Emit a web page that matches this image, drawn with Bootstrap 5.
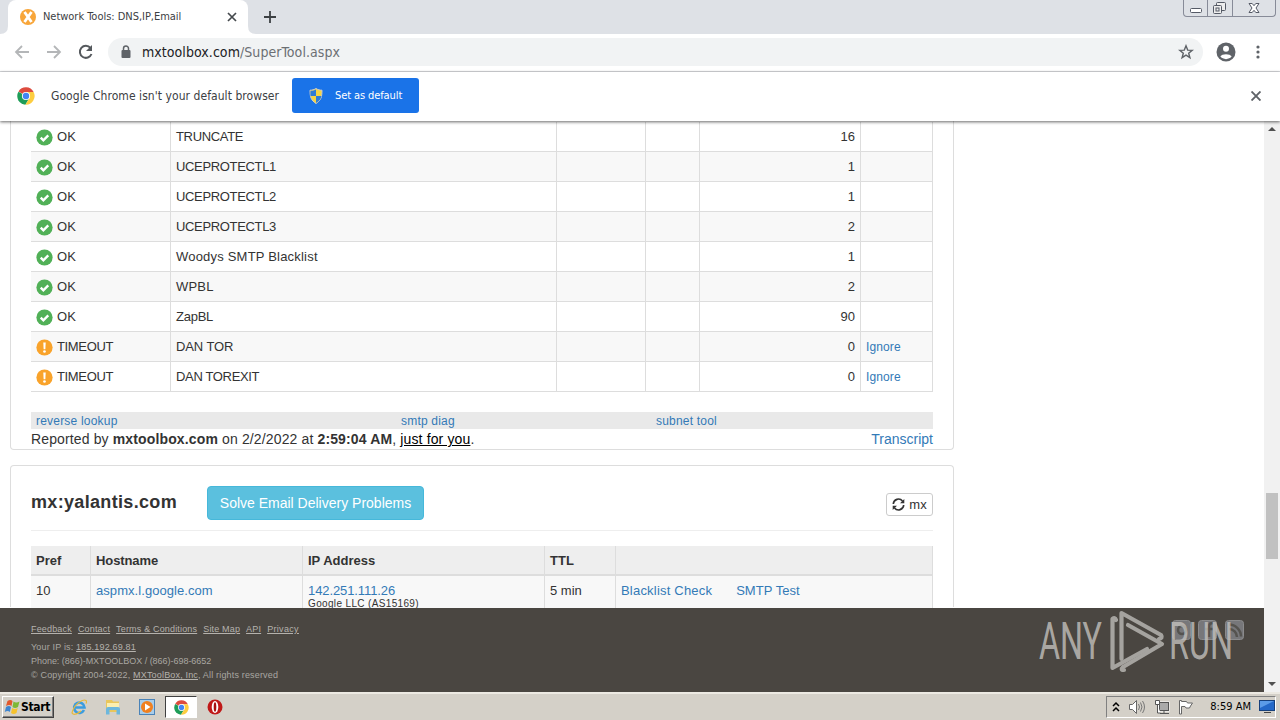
<!DOCTYPE html>
<html lang="en">
<head>
    <meta charset="UTF-8">
    <meta name="viewport" content="width=device-width, initial-scale=1.0">
    <title>Network Tools: DNS,IP,Email</title>
    <link href="https://cdn.jsdelivr.net/npm/bootstrap@5.3.0/dist/css/bootstrap.min.css" rel="stylesheet">
    <style>
        body { width: 1280px; height: 720px; font: 13px/18px "Liberation Sans", Arial, sans-serif; color: #333; background: #fff; }
        svg { display: block; flex: none; }
        a { color: #337ab7; text-decoration: none; }
        .chrome-font { font-family: "DejaVu Sans Condensed", "DejaVu Sans", sans-serif; }

        /* letter spacing steps */
        .ls-n3 { letter-spacing: -.34px; }
        .ls-n2 { letter-spacing: -.25px; }
        .ls-n1 { letter-spacing: -.1px; }
        .ls-0 { letter-spacing: -.03px; }
        .ls-1 { letter-spacing: .06px; }
        .ls-2 { letter-spacing: .2px; }
        .ls-3 { letter-spacing: .33px; }

        /* browser frame */
        .tabstrip { height: 34px; background: #dee1e6; }
        .tab-foot { align-self: flex-end; }
        .tab { width: 240px; height: 34px; background: #fff; border-radius: 8px 8px 0 0; padding: 0 11px 0 12px; font-size: 11px; color: #3c4043; gap: 7px; }
        .win-buttons { height: 17px; margin-right: 4px; border: 1px solid #878b98; border-top: 0; border-radius: 0 0 4px 4px; }
        .win-buttons span { width: 25px; height: 16px; border-right: 1px solid #878b98; }
        .win-buttons span:first-child { width: 24px; }
        .win-buttons span:last-child { width: 42px; border: 0; }
        .toolbar { height: 38px; border-bottom: 1px solid #d8dadd; padding: 0 14px 1px; }
        .omnibox { height: 28px; width: 1095px; border-radius: 14px; background: #f1f3f4; margin: 0 13px 0 14px; padding: 0 9px 0 10px; font-size: 14px; color: #6b6f73; gap: 8px; }
        .omnibox b { font-weight: 400; color: #202124; }
        .infobar { height: 49px; padding: 0 19px 2px 17px; box-shadow: 0 1px 3px #0009; z-index: 2; font-size: 12px; color: #3c4043; }
        .infobar-text { width: 241px; margin-left: 16px; white-space: nowrap; }
        .set-default { width: 127px; height: 35px; border-radius: 3px; background: #1a73e8; color: #fff; font-size: 11px; gap: 11px; }

        /* page */
        .viewport { height: 571px; }
        .content-area { height: 487px; padding: 0 10px; }
        .panel { width: 944px; border: 1px solid #ddd; padding: 0 20px; }
        .panel-top { height: 329px; border-top: 0; border-radius: 0 0 4px 4px; padding-top: 1px; }
        .panel-mx { height: 142px; margin-top: 15px; border-bottom: 0; border-radius: 4px 4px 0 0; }
        .grid-row { display: grid; grid-template-columns: 140px 386px 89px 54px 161px 72px; height: 30px; border-bottom: 1px solid #ddd; }
        .grid-row:nth-child(even) { background: #f8f8f8; }
        .grid-row > div, .mx-row > div { border-right: 1px solid #ddd; padding: 6px 5px 0; white-space: nowrap; }
        .grid-row svg { margin: 1px 4px 0 0; }
        .ignore-link { font-size: 12px; letter-spacing: .12px; }
        .tool-links { height: 17px; margin-top: 20px; background: #e9e9e9; font-size: 12px; line-height: 18px; display: grid; grid-template-columns: 365px 255px 1fr; padding-left: 5px; }
        .report-line { font-size: 14px; line-height: 20px; }
        .report-line span { letter-spacing: .135px; }
        .report-line u { color: #000; }
        .mx-head { height: 65px; border-bottom: 1px solid #eee; padding-top: 10px; }
        .mx-title { font-size: 18px; font-weight: 700; width: 176px; padding-bottom: 2px; }
        .btn-solve { height: 34px; width: 217px; background: #5bc0de; border: 1px solid #46b8da; border-radius: 4px; color: #fff; font-size: 14px; }
        .btn-mx { width: 47px; height: 23px; border: 1px solid #ccc; border-radius: 3px; margin-top: 3px; }
        .mx-row { display: grid; grid-template-columns: 60px 212px 242px 71px 317px; height: 32px; background: #f8f8f8; }
        .mx-row.titles { height: 30px; margin-top: 15px; background: #eee; border-bottom: 2px solid #ddd; font-weight: 700; }
        .asn { font-size: 10px; line-height: 10px; letter-spacing: .35px; margin-top: -1px; }
        .site-footer { height: 84px; background: #4a4641; color: #a9a6a1; font-size: 9px; line-height: 14px; padding: 14px 0 0 31px; letter-spacing: .17px; }
        .site-footer u { color: #b5b2ad; }
        .footer-links { gap: 6px; margin-bottom: 4px; }
        .watermark { left: 1036px; top: 608px; overflow: visible; }
        .scroll-track { width: 16px; background: #f1f1f1; }
        .scroll-thumb { width: 12px; height: 66px; margin-top: 360px; background: #c1c1c1; }

        /* taskbar */
        .taskbar { height: 28px; background: #d4d0c8; border-top: 2px solid #ece9e2; font-size: 11px; color: #000; padding: 0 4px 0 2px; }
        .start-btn { width: 52px; height: 22px; border: 1px solid; border-color: #fff #404040 #404040 #fff; box-shadow: inset -1px -1px #808080; font-size: 12px; font-weight: 700; padding-left: 1px; }
        .quick-icons { gap: 18px; margin-left: 17px; }
        .task-active { width: 32px; height: 22px; border: 1px solid; border-color: #404040 #fff #fff #404040; background: #fff; margin: 0 -8px; }
        .tray { width: 170px; height: 22px; border: 1px solid; border-color: #808080 #fff #fff #808080; padding-left: 5px; }
    </style>
</head>
<body class="overflow-hidden d-flex flex-column">
    <svg width="0" height="0" class="position-absolute">
        <symbol id="ok" viewBox="0 0 18 18">
            <circle cx="9" cy="9" r="8.6" fill="#51b057"/>
            <path d="M5 9.2l2.800 2.800L13 6.800" fill="none" stroke="#fff" stroke-width="2.500"/>
        </symbol>
        <symbol id="warn" viewBox="0 0 18 18">
            <circle cx="9" cy="9" r="8.6" fill="#f9a32b"/>
            <path d="M7.700 3.600h2.600L9.900 10.800H8.100z" fill="#fff"/>
            <circle cx="9" cy="13.200" r="1.400" fill="#fff"/>
        </symbol>
        <symbol id="chrome" viewBox="0 0 18 18">
            <path d="M9 9L1.500 4.500A8.700 8.700 0 0 1 16.600 5H9z" fill="#dd4b3e"/>
            <path d="M9 9L1.400 4.700A8.700 8.700 0 0 0 8.400 17.700L12.400 11z" fill="#1e9d58"/>
            <path d="M9 5h7.600A8.700 8.700 0 0 1 8.400 17.700L12.500 11z" fill="#fdcd40"/>
            <circle cx="9" cy="9" r="4.100" fill="#fff"/>
            <circle cx="9" cy="9" r="3.200" fill="#4285f4"/>
        </symbol>
    </svg>

    <!-- Tab strip -->
    <div class="tabstrip d-flex justify-content-between chrome-font flex-shrink-0">
        <div class="d-flex align-items-center">
            <svg class="tab-foot" width="8" height="8"><path d="M8 0v8H0q8 0 8-8z" fill="#fff"/></svg>
            <div class="tab d-flex align-items-center">
                <svg width="16" height="16" viewBox="0 0 16 16"><circle cx="8" cy="8" r="8" fill="#f8a63a"/><path d="M4.500 3l7 10M11.500 3l-7 10" stroke="#fff" stroke-width="2.800"/></svg>
                <span class="ls-0">Network Tools: DNS,IP,Email</span>
                <svg class="ms-auto" width="10" height="10" viewBox="0 0 10 10"><path d="M1 1l8 8M9 1L1 9" stroke="#45494d" stroke-width="1.700"/></svg>
            </div>
            <svg class="tab-foot" width="8" height="8"><path d="M0 0v8h8q-8 0-8-8z" fill="#fff"/></svg>
            <svg class="ms-2" width="12" height="12" viewBox="0 0 12 12"><path d="M6 0v12M0 6h12" stroke="#3c4043" stroke-width="1.800"/></svg>
        </div>
        <div class="win-buttons d-flex">
            <span><svg width="23" height="16"><rect x="6.500" y="8.500" width="11" height="4" rx="1" fill="#fff" stroke="#555a66"/></svg></span>
            <span><svg width="24" height="16" fill="#eee" stroke="#555a66"><rect x="8.500" y="2.500" width="9" height="8" rx="1"/><rect x="5.500" y="5.500" width="8" height="8" rx="1"/><rect x="8" y="8" width="3" height="3"/></svg></span>
            <span><svg width="42" height="16"><path d="M16 3.500h3.200l1.800 2.200 1.800-2.200H26L23 8l3 4.500h-3.200L21 10.300l-1.800 2.200H16L19 8z" fill="#fff" stroke="#555a66"/></svg></span>
        </div>
    </div>

    <!-- Address bar -->
    <div class="toolbar d-flex align-items-center chrome-font flex-shrink-0">
        <svg width="80" height="18" viewBox="0 0 80 18" fill="none" stroke="#b4b6b8" stroke-width="1.800">
            <path d="M15 9H2M8 3L2 9l6 6M33 9h13M40 3l6 6-6 6"/>
            <path d="M76.500 5A6 6 0 1 0 77.500 11" stroke="#55595d" stroke-width="2"/>
            <path d="M78 2v6h-6z" fill="#55595d" stroke="none"/>
        </svg>
        <div class="omnibox d-flex align-items-center">
            <svg width="16" height="16" viewBox="0 0 16 16"><rect x="3.500" y="6" width="9" height="8" rx="1" fill="#5f6368"/><path d="M5.500 6V4.500a2.500 2.500 0 0 1 5 0V6" fill="none" stroke="#5f6368" stroke-width="1.500"/></svg>
            <span class="ls-1"><b>mxtoolbox.com</b>/SuperTool.aspx</span>
            <svg class="ms-auto" width="16" height="16" viewBox="0 0 16 16"><path d="M8 1.800l1.700 4.300 4.500.3-3.500 2.900 1.200 4.400L8 11.200l-3.900 2.500 1.200-4.400-3.500-2.900 4.500-.3z" fill="none" stroke="#5f6368" stroke-width="1.400"/></svg>
        </div>
        <svg width="20" height="20" viewBox="0 0 20 20"><circle cx="10" cy="10" r="9.500" fill="#5f6368"/><circle cx="10" cy="6.800" r="3" fill="#fff"/><path d="M4.300 14.200a6.200 3.200 0 0 1 11.400 0 7 7 0 0 1-11.400 0z" fill="#fff"/></svg>
        <svg class="ms-auto" width="16" height="16" viewBox="0 0 16 16" fill="#5f6368"><circle cx="8" cy="3" r="1.600"/><circle cx="8" cy="8" r="1.600"/><circle cx="8" cy="13" r="1.600"/></svg>
    </div>

    <!-- Default browser prompt -->
    <div class="infobar position-relative d-flex align-items-center chrome-font flex-shrink-0">
        <svg width="18" height="18"><use href="#chrome"/></svg>
        <span class="infobar-text ls-1">Google Chrome isn't your default browser</span>
        <div class="set-default d-flex align-items-center">
            <svg class="ms-3" width="16" height="16" viewBox="0 0 16 16"><path d="M8 .5c2 1.300 4 1.700 6 1.700 0 7-1 10-6 13.300C3 12.200 2 9.200 2 2.200 4 2.200 6 1.800 8 .5z" fill="#f5d544" stroke="#ccc"/><path d="M8 1.500V8H2.600C2.300 6 2.500 4 2.500 2.800 5 2.700 6.500 2.300 8 1.500zM8 8h5.400c-.6 3-2 5-5.400 7z" fill="#2f7cd6"/></svg>
            <span class="ls-n1">Set as default</span>
        </div>
        <svg class="ms-auto" width="10" height="10" viewBox="0 0 10 10"><path d="M.5.5l9 9M9.500.5l-9 9" stroke="#5f6368" stroke-width="1.900"/></svg>
    </div>

    <div class="viewport d-flex flex-shrink-0">
        <main class="flex-grow-1">
            <div class="content-area overflow-hidden">
                <div class="panel panel-top">
                    <div id="blacklists"></div>
                    <div class="tool-links ls-2">
                        <a href="#">reverse lookup</a>
                        <a href="#">smtp diag</a>
                        <a href="#">subnet tool</a>
                    </div>
                    <div class="report-line d-flex justify-content-between">
                        <span>Reported by <b>mxtoolbox.com</b> on 2/2/2022 at <b>2:59:04 AM</b>, <u>just for you</u>.</span>
                        <a href="#">Transcript</a>
                    </div>
                </div>
                <div class="panel panel-mx">
                    <div class="mx-head d-flex align-items-center">
                        <div class="mx-title ls-3">mx:yalantis.com</div>
                        <div class="btn-solve d-flex align-items-center justify-content-center">Solve Email Delivery Problems</div>
                        <div class="btn-mx d-flex align-items-center justify-content-center gap-1 ms-auto">
                            <svg width="13" height="13" viewBox="0 0 13 13"><path d="M1.300 6A5.200 5.200 0 0 1 10.500 3M11.700 7A5.200 5.200 0 0 1 2.500 10" fill="none" stroke="#333" stroke-width="1.600"/><path d="M12.300 1v4.300H8zM.7 12V7.700H5z" fill="#333"/></svg>
                            <span>mx</span>
                        </div>
                    </div>
                    <div class="mx-row titles">
                        <div>Pref</div>
                        <div class="ls-n1">Hostname</div>
                        <div>IP Address</div>
                        <div>TTL</div>
                        <div></div>
                    </div>
                    <div class="mx-row">
                        <div>10</div>
                        <div class="ls-1"><a href="#">aspmx.l.google.com</a></div>
                        <div><a href="#" class="ls-n1">142.251.111.26</a><div class="asn">Google LLC (AS15169)</div></div>
                        <div>5 min</div>
                        <div class="d-flex gap-4"><a href="#" class="ls-2">Blacklist Check</a><a href="#" class="ls-1">SMTP Test</a></div>
                    </div>
                </div>
            </div>
            <footer class="site-footer">
                <div class="footer-links d-flex">
                    <u>Feedback</u><u>Contact</u><u>Terms &amp; Conditions</u><u>Site Map</u><u>API</u><u class="ls-3">Privacy</u>
                </div>
                <div>Your IP is: <u>185.192.69.81</u></div>
                <div class="ls-0">Phone: (866)-MXTOOLBOX / (866)-698-6652</div>
                <div>© Copyright 2004-2022, <u>MXToolBox, Inc</u>, All rights reserved</div>
            </footer>
        </main>
        <div class="scroll-track d-flex flex-column align-items-center py-1">
            <svg width="8" height="8"><path d="M0 6l4-4 4 4z" fill="#505050"/></svg>
            <div class="scroll-thumb"></div>
            <svg class="mt-auto" width="8" height="8"><path d="M0 2l4 4 4-4z" fill="#505050"/></svg>
        </div>
    </div>

    <!-- Watermark over the footer, with the social icons behind it -->
    <svg class="watermark position-absolute" width="212" height="66" viewBox="0 0 212 66">
        <g fill="#77777a" stroke="#8b8b8c">
            <rect x="136.500" y="12.500" width="18" height="19" rx="3"/><rect x="162.500" y="12.500" width="18" height="19" rx="3"/><rect x="189.500" y="12.500" width="18" height="19" rx="3"/>
        </g>
        <g fill="none" stroke="#55534f" stroke-width="2.500">
            <path d="M193 21a8 8 0 0 1 8 8M193 16.500a12 12 0 0 1 12 12"/><path d="M173 29V18q0-3 4-3M169 21h8"/><circle cx="146" cy="22" r="4"/>
        </g>
        <g font-family="Roboto, sans-serif" font-size="52" fill="#c4c2be" fill-opacity=".8">
            <text x="3" y="51" textLength="63" lengthAdjust="spacingAndGlyphs">ANY</text>
            <text x="133" y="51" textLength="64" lengthAdjust="spacingAndGlyphs">RUN</text>
        </g>
        <g fill="none" stroke="#a5a39f" stroke-width="4.200" stroke-linejoin="round" stroke-linecap="round" transform="translate(74 0)">
            <path d="M6 12Q5 9 2.500 11V60L37 41"/><path d="M11.500 51V5L51 27q2 3-2 4"/><path d="M18 17L52 36 13 59q-3 3 1 3"/>
        </g>
    </svg>

    <!-- Taskbar -->
    <div class="taskbar d-flex align-items-center justify-content-between chrome-font flex-shrink-0">
        <div class="d-flex align-items-center">
            <div class="start-btn d-flex align-items-center">
                <svg width="17" height="16" viewBox="0 0 16 16"><path d="M3 2q3-2 5 0L7 7q-2-2-5.500 0z" fill="#e2582c"/><path d="M9 2.500q2.500 2 6 0L13.500 8q-3 2-5.500 0z" fill="#7db836"/><path d="M1.500 8q3-2 5 0l-1.200 5q-2-2-5 0z" fill="#3d85d0"/><path d="M7.700 9q2.500 2 5.500 0L12 14q-3 2-5.500 0z" fill="#f6c22c"/></svg>
                <span class="ls-n3">Start</span>
            </div>
            <div class="quick-icons d-flex align-items-center">
                <svg width="16" height="16" viewBox="0 0 16 16" fill="none"><path d="M13 11A5.200 5.200 0 1 1 13.500 8.500H4" stroke="#3a9ce0" stroke-width="2.600"/><path d="M15 1.500C12-.5 3 5 1 14c2 3 7 0 9-2M15 1.500c1 1 .3 2.500 0 3" stroke="#e6b93c" stroke-width="1.200"/></svg>
                <svg width="16" height="16" viewBox="0 0 16 16"><path d="M1 1h6l1 1.500h6V13H1z" fill="#e9c65c"/><path d="M2 4h12v5H2z" fill="#fbeeb0"/><path d="M1 15.500V10q0-2 2-2h10q2 0 2 2v5.500h-3.500V11h-7v4.500z" fill="#6db7dd"/></svg>
                <svg width="16" height="16" viewBox="0 0 16 16"><rect x=".5" y=".5" width="15" height="15" fill="#a8cdea" stroke="#4a83b8"/><circle cx="8" cy="8" r="6" fill="#f08020"/><path d="M6 4.500v7L11.500 8z" fill="#fff"/></svg>
                <div class="task-active d-flex align-items-center justify-content-center"><svg width="15" height="15"><use href="#chrome"/></svg></div>
                <svg width="16" height="16" viewBox="0 0 16 16"><circle cx="8" cy="8" r="7.500" fill="#c01818"/><ellipse cx="8" cy="8" rx="3.300" ry="6" fill="#fff"/><ellipse cx="8" cy="8" rx="1.300" ry="4.800" fill="#a81010"/></svg>
            </div>
        </div>
        <div class="tray d-flex align-items-center">
            <svg width="8" height="12" viewBox="0 0 8 12" fill="none" stroke="#000" stroke-width="1.500"><path d="M1 5l3-3 3 3M1 10l3-3 3 3"/></svg>
            <svg class="ms-2" width="18" height="16" viewBox="0 0 18 16"><path d="M1.500 5.500h3l4-4v13l-4-4h-3z" fill="#fff" stroke="#666"/><path d="M10.500 5q2 3 0 6M12.500 3.500q3 4.500 0 9M14.500 2q4 6 0 12" fill="none" stroke="#777"/></svg>
            <svg class="ms-2" width="16" height="16" viewBox="0 0 16 16" stroke="#555"><rect x="4.500" y="3.500" width="10" height="8" fill="#bbb" stroke="#fff" stroke-width="2"/><rect x="5.500" y="3.500" width="9" height="8" fill="#aaa"/><path d="M6 14.500h9M10 12v2"/><path d="M1.500 1.500h4v4h-4zM3.500 6v8h3" fill="#fff"/></svg>
            <svg class="ms-2" width="16" height="16" viewBox="0 0 16 16"><path d="M1.500 15V1.500h2v1h5l1 1.500h5l-2 3-1 2H8l-1-1.500H3.500V15z" fill="#fff" stroke="#666"/></svg>
            <span class="ms-auto text-nowrap">8:59 AM</span>
            <svg class="ms-2" width="16" height="14" viewBox="0 0 16 14"><rect x=".5" y=".5" width="15" height="10" fill="#2468c8" stroke="#16407c"/><path d="M1 1h14L1 8z" fill="#5b9be8"/><path d="M5 12.500h7" stroke="#444"/></svg>
        </div>
    </div>

    <script>
        const blacklists = [
            ["OK", "TRUNCATE", 16], ["OK", "UCEPROTECTL1", 1], ["OK", "UCEPROTECTL2", 1], ["OK", "UCEPROTECTL3", 2],
            ["OK", "Woodys SMTP Blacklist", 1], ["OK", "WPBL", 2], ["OK", "ZapBL", 90],
            ["TIMEOUT", "DAN TOR", 0], ["TIMEOUT", "DAN TOREXIT", 0]
        ];
        const tracking = { "Woodys SMTP Blacklist": "ls-2", "WPBL": "ls-2", "DAN TOR": "ls-n1", "ZapBL": "ls-n2" };

        document.getElementById("blacklists").innerHTML = blacklists.map(([status, name, ms]) => `
            <div class="grid-row">
                <div class="d-flex">
                    <svg width="17" height="17"><use href="#${status === "OK" ? "ok" : "warn"}"/></svg>
                    <span class="${status === "OK" ? "ls-1" : "ls-n3"}">${status}</span>
                </div>
                <div class="${tracking[name] || "ls-n3"}">${name}</div>
                <div></div>
                <div></div>
                <div class="text-end">${ms}</div>
                <div>${status === "OK" ? "" : '<a href="#" class="ignore-link">Ignore</a>'}</div>
            </div>`).join("");
    </script>
    <script src="https://cdn.jsdelivr.net/npm/bootstrap@5.3.0/dist/js/bootstrap.bundle.min.js"></script>
</body>
</html>
